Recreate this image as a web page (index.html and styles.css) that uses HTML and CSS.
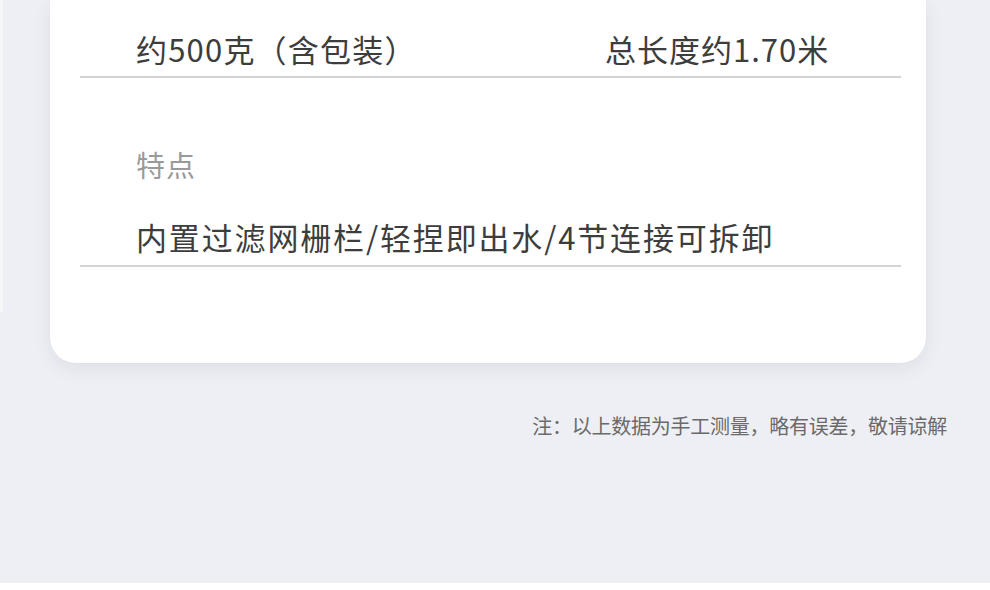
FILE: index.html
```html
<!DOCTYPE html>
<html lang="zh-CN">
<head>
<meta charset="utf-8">
<title>参数</title>
<link rel="stylesheet" href="styles.css">
</head>
<body>
<div class="page">
  <div class="edge"></div>
  <section class="card">
    <div class="row row-pair">
      <span class="value">约500克（含包装）</span>
      <span class="value value-tight">总长度约1.70米</span>
    </div>
    <div class="block">
      <div class="label">特点</div>
      <div class="row row-single">
        <span class="value value-wide">内置过滤网栅栏/轻捏即出水/4节连接可拆卸</span>
      </div>
    </div>
  </section>
  <p class="note">注：以上数据为手工测量，略有误差，敬请谅解</p>
</div>
<div class="footer"></div>
</body>
</html>
```
FILE: styles.css
```css
html, body {
  margin: 0;
  padding: 0;
}
body {
  width: 990px;
  height: 590px;
  overflow: hidden;
  background: #ffffff;
  font-family: "Noto Sans CJK SC", "Noto Sans", sans-serif;
}
.page {
  position: relative;
  height: 583px;
  background: #eeeff4;
  padding: 0 64px 0 50px;
  box-sizing: border-box;
  display: flex;
  flex-direction: column;
}
.edge {
  position: absolute;
  left: 0;
  top: 0;
  width: 3px;
  height: 312px;
  background: #f6f6f9;
}
.card {
  background: #ffffff;
  border-radius: 0 0 26px 26px;
  padding: 0 25px 96px 30px;
  box-shadow: 0 6px 18px rgba(40, 45, 70, 0.08);
}
.row {
  border-bottom: 2px solid #d3d3d3;
  padding-left: 56px;
}
.row-pair {
  display: grid;
  grid-template-columns: 469px 1fr;
  padding-top: 29px;
  padding-bottom: 7px;
}
.value {
  font-size: 31px;
  line-height: 40px;
  letter-spacing: 1.2px;
  color: #3d3d3d;
  white-space: nowrap;
}
.value-tight {
  letter-spacing: 1px;
}
.value-wide {
  letter-spacing: 1.85px;
}
.block {
  padding-top: 66px;
}
.label {
  padding-left: 56px;
  font-size: 29px;
  line-height: 40px;
  letter-spacing: 1px;
  color: #9a9a9a;
}
.row-single {
  margin-top: 33px;
  padding-bottom: 8px;
}
.note {
  margin: 49px 0 0;
  align-self: flex-end;
  margin-right: -21px;
  font-size: 20px;
  line-height: 28px;
  letter-spacing: -0.25px;
  color: #6a6a6a;
}
.footer {
  height: 7px;
  background: #ffffff;
}
```
